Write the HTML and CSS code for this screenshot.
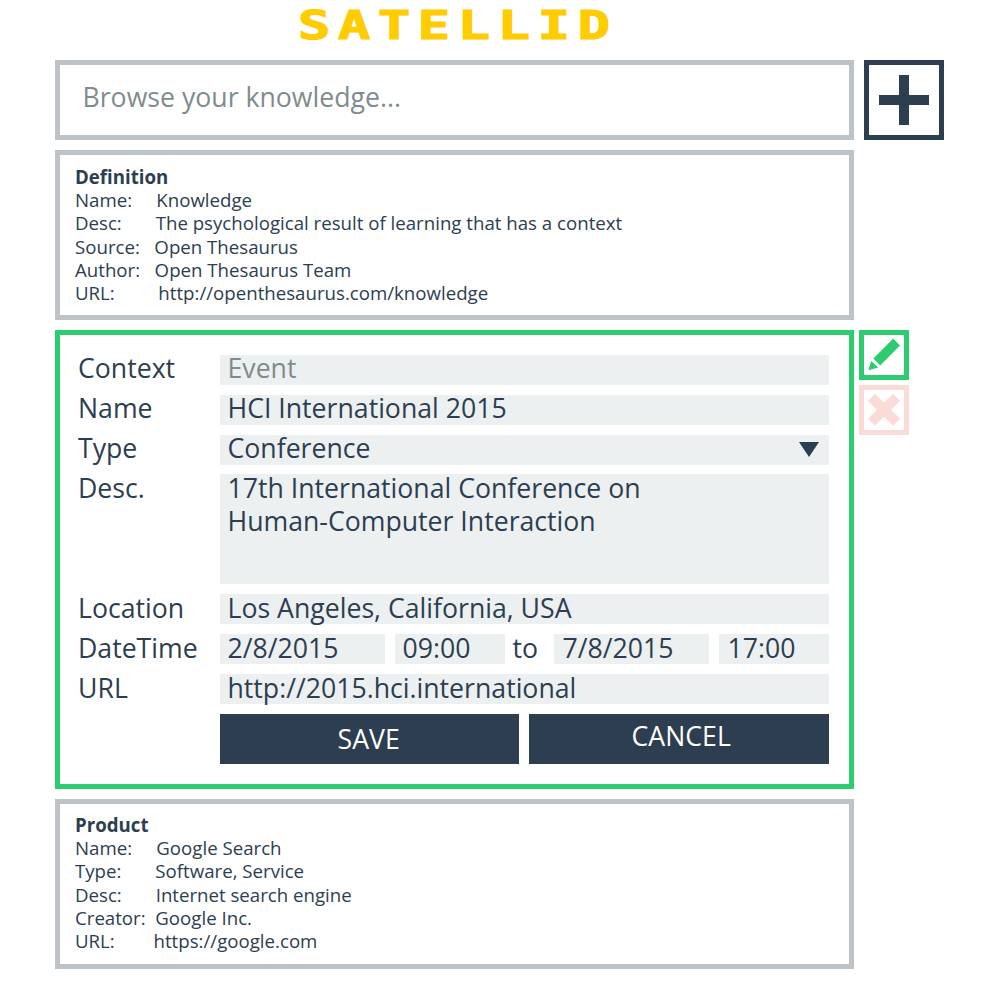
FILE: index.html
```html
<!DOCTYPE html>
<html lang="en">
<head>
<meta charset="utf-8">
<title>Satellid</title>
<link rel="stylesheet" href="styles.css">
</head>
<body>
<header class="brand"><h1 class="logo">SATELLID</h1></header>
<main class="page">
  <div class="row search-row">
    <div class="box search">Browse your knowledge...</div>
    <button class="add" aria-label="Add"><svg width="50" height="50" viewBox="0 0 50 50"><path d="M20 0h10v20h20v10H30v20H20V30H0V20h20z"/></svg></button>
  </div>
  <article class="box card definition"><h2>Definition</h2>
<p>Name:     Knowledge</p>
<p>Desc:       The psychological result of learning that has a context</p>
<p>Source:   Open Thesaurus</p>
<p>Author:   Open Thesaurus Team</p>
<p>URL:         http://openthesaurus.com/knowledge</p>
  </article>
  <div class="row editor-row">
    <section class="box editor">
      <div class="label top">Context</div><div class="field top muted">Event</div>
      <div class="label top">Name</div><div class="field top">HCI International 2015</div>
      <div class="label top">Type</div><div class="field top select">Conference<svg width="20" height="15" viewBox="0 0 20 15"><path d="M0 0h20L10 15z"/></svg></div>
      <div class="label">Desc.</div><div class="field area"><p>17th International Conference on<br>Human-Computer Interaction</p></div>
      <div class="label">Location</div><div class="field">Los Angeles, California, USA</div>
      <div class="label">DateTime</div>
      <div class="dates"><div class="field">2/8/2015</div><div class="field">09:00</div><span class="to">to</span><div class="field late">7/8/2015</div><div class="field late">17:00</div></div>
      <div class="label">URL</div><div class="field">http://2015.hci.international</div>
      <div class="actions"><button class="btn save">SAVE</button><button class="btn cancel">CANCEL</button></div>
    </section>
    <div class="tools">
      <button class="tool edit" aria-label="Edit"><svg width="40" height="40" viewBox="0 0 40 40"><path d="M29.2 3.6l6.8 6.8-19.8 20-6.8-6.8zM7.2 26l7 6.6-9.8 2.6z"/></svg></button>
      <button class="tool remove" aria-label="Remove"><svg width="40" height="40" viewBox="0 0 40 40"><path d="M11 3.7l9 9 9-9 7 7-9 9 9 9-7 7-9-9-9 9-7-7 9-9-9-9z"/></svg></button>
    </div>
  </div>
  <article class="box card product"><h2>Product</h2>
<p>Name:     Google Search</p>
<p>Type:       Software, Service</p>
<p>Desc:       Internet search engine</p>
<p>Creator:  Google Inc.</p>
<p>URL:        https://google.com</p>
  </article>
</main>
</body>
</html>
```
FILE: styles.css
```css
* { box-sizing: border-box; }
body { margin: 0; background: #fff; color: #2c3e50; font: 26.67px/33.33px "Open Sans", sans-serif; }
h1, h2, p { margin: 0; font-size: inherit; }
button { padding: 0; font: inherit; background: #fff; border-radius: 0; }
svg { display: block; fill: currentColor; }

.brand { height: 60px; padding: 2px 0 0 298px; }
.logo {
  width: 240px;
  color: #fc0;
  font: bold 39.5px/47px "DejaVu Sans Mono", monospace;
  letter-spacing: 5.6px;
  white-space: nowrap;
  transform: scaleX(1.36);
  transform-origin: 0 0;
  -webkit-text-stroke: 1.2px #fc0;
}

.page { display: flex; flex-direction: column; padding-left: 55px; }
.row { display: flex; align-items: flex-start; }
.box { width: 799px; flex: none; border: 5px solid #bdc3c7; }

.search-row { gap: 10px; margin-bottom: 10px; }
.search { height: 80px; padding-left: 22.5px; line-height: 63px; color: #7f8c8d; }
.add { display: grid; place-items: center; width: 80px; height: 80px; border: 5px solid #2c3e50; color: #2c3e50; }

.card { height: 170px; padding: 9.8px 0 0 15px; font-size: 18.67px; line-height: 23.33px; }
.card h2, .card p { white-space: pre; }
.card h2 { font-weight: 700; }
.product { margin-top: 10px; padding-top: 8.6px; }

.editor-row { gap: 5px; margin-top: 10px; }
.editor {
  display: grid;
  grid-template-columns: 142px 609px;
  grid-template-rows: 30px 30px 29px 110px 30px 30px 30px 50px;
  row-gap: 10px;
  height: 459px;
  padding: 20px 0 0 18px;
  border-color: #2ecc71;
}
.label, .field, .to { line-height: 27px; white-space: nowrap; }
.label.top, .field.top { line-height: 25px; }
.field { height: 30px; padding-left: 7.5px; background: #ecf0f1; }
.field.late { padding-left: 8.5px; }
.muted { color: #7f8c8d; }
.select { display: flex; justify-content: space-between; padding-right: 10px; }
.select svg { margin-top: 7px; }
.area { height: 110px; }
.area p { margin-top: -3px; line-height: 33.33px; }
.dates { display: grid; grid-template-columns: 165px 110px 29px 155px 110px; column-gap: 10px; width: 609px; }
.dates .to { margin-left: -2.5px; }
.actions { grid-column: 2; display: grid; grid-template-columns: 299.4px 299.6px; gap: 10px; }
.btn { display: block; height: 50px; border: 0; background: #2c3e50; color: #fff; }
.save { padding-right: 2px; }
.cancel { padding: 0 0 6.5px 4px; }

.tools { display: grid; gap: 5px; }
.tool { width: 50px; height: 50px; border: 5px solid; }
.edit { color: #2ecc71; }
.remove { color: #fadbd8; }
```
